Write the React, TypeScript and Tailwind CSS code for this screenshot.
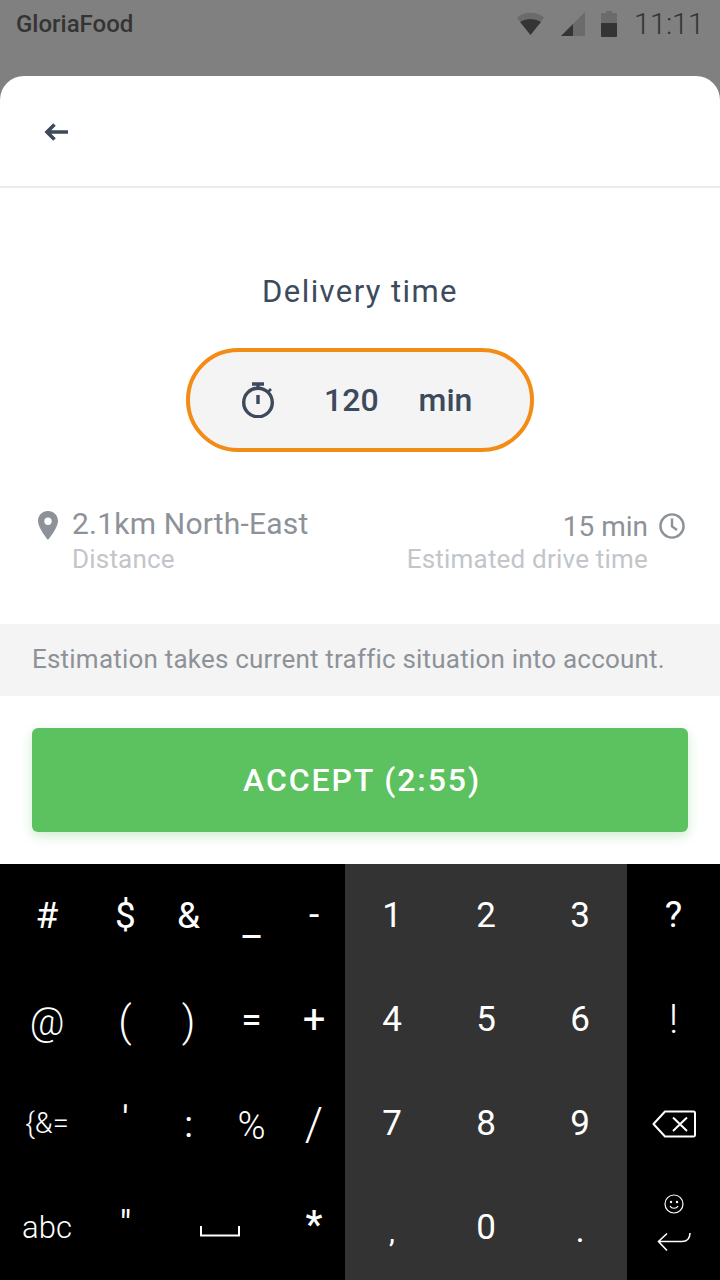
import React from "react";

const K = ({ c = "", children }: { c?: string; children: React.ReactNode }) => (
  <div className={`flex items-center justify-center ${c}`}>{children}</div>
);

export default function App() {
  return (
    <div className="relative flex h-[1280px] w-[720px] flex-col overflow-hidden bg-[#808080] font-['Roboto',sans-serif]">
      <div className="flex h-[48px] items-center justify-between pl-[16px] pr-[16px] text-[#343434]">
        <span className="text-[24px] font-medium">GloriaFood</span>
        <div className="flex items-center">
          <svg width="27" height="26" viewBox="0 0 27 26" className="mr-[17px]">
            <path d="M0 6.5C7 0 20 0 27 6.5L24 11C18 7 9 7 3 11Z" fill="#6b6b6b" />
            <path d="M3 11C9 7 18 7 24 11L13.5 24Z" fill="#343434" />
          </svg>
          <svg width="24" height="24" viewBox="0 0 24 24" className="mr-[16px]">
            <path d="M24 0V24H0Z" fill="#6b6b6b" />
            <path d="M12 12V24H0Z" fill="#343434" />
          </svg>
          <svg width="16" height="26" viewBox="0 0 16 26" className="mr-[17px]">
            <path d="M5 0H11V2H15A1 1 0 0 1 16 3V12H0V3A1 1 0 0 1 1 2H5Z" fill="#6b6b6b" />
            <path d="M0 12H16V25A1 1 0 0 1 15 26H1A1 1 0 0 1 0 25Z" fill="#343434" />
          </svg>
          <span className="text-[30px] font-light leading-none tracking-[-0.5px]">11:11</span>
        </div>
      </div>

      <div className="mt-[28px] flex h-[788px] flex-col rounded-t-[24px] bg-white">
        <div className="flex h-[112px] shrink-0 items-center border-b-2 border-[#ebebeb] pl-[44px] pt-[2px]">
          <svg width="24" height="18" viewBox="0 0 24 18">
            <path d="M24 9H3M10.5 1.5L3 9L10.5 16.5" fill="none" stroke="#3d4a5c" strokeWidth="3.6" />
          </svg>
        </div>

        <div className="mt-[84px] text-center text-[31px] leading-[40px] tracking-[1.4px] text-[#3d4a5c]">Delivery time</div>

        <div className="mt-[36px] flex h-[104px] w-[348px] items-center self-center rounded-full border-4 border-[#f28c16] bg-[#f4f4f4] text-[#3d4a5c]">
          <svg width="36" height="36" viewBox="0 0 36 36" className="ml-[50px]" fill="none" stroke="#3d4a5c" strokeWidth="3.4">
            <circle cx="18" cy="20.5" r="14.3" />
            <path d="M12 2H24M18 2V6M18 13V22" />
            <path d="M28 10L31 7" strokeWidth="2.6" />
          </svg>
          <span className="ml-[48px] text-[32px] font-medium leading-none">120</span>
          <span className="ml-[40px] text-[32px] font-medium leading-none">min</span>
        </div>

        <div className="mt-[52px] flex justify-between pl-[37px] pr-[34px]">
          <div className="flex">
            <svg width="22" height="30" viewBox="0 0 22 30" className="mt-[7px]">
              <path fillRule="evenodd" d="M11 0C5 0 1 4.5 1 10C1 17 11 29 11 29C11 29 21 17 21 10C21 4.5 17 0 11 0ZM11 6.5A3.7 3.7 0 1 1 11 13.9A3.7 3.7 0 0 1 11 6.5Z" fill="#8d9299" />
            </svg>
            <div className="ml-[13px]">
              <div className="text-[30px] leading-[40px] tracking-[0.2px] text-[#8d9299]">2.1km North-East</div>
              <div className="mt-[-3px] text-[26px] leading-[36px] tracking-[0.2px] text-[#c2c5c9]">Distance</div>
            </div>
          </div>
          <div className="flex">
            <div className="text-right">
              <div className="mt-[4px] text-[28px] leading-[38px] text-[#8d9299]">15 min</div>
              <div className="mt-[-5px] text-[26px] leading-[36px] tracking-[0.2px] text-[#c2c5c9]">Estimated drive time</div>
            </div>
            <svg width="28" height="28" viewBox="0 0 28 28" className="ml-[10px] mt-[8px]" fill="none" stroke="#8d9299" strokeWidth="2.4">
              <circle cx="14" cy="14" r="11.6" />
              <path d="M14 6.5V14.5L19 18" />
            </svg>
          </div>
        </div>

        <div className="mt-[47px] flex h-[72px] shrink-0 items-center bg-[#f4f4f4] pb-[2px] pl-[32px] text-[26px] tracking-[0.21px] text-[#8d9299]">
          Estimation takes current traffic situation into account.
        </div>

        <div className="mx-[32px] mt-[32px] flex h-[104px] items-center justify-center rounded-[6px] bg-[#5cc15f] pl-[4px] text-[32px] font-medium tracking-[1.9px] text-white shadow-[0_4px_12px_rgba(92,193,95,0.3)]">
          ACCEPT (2:55)
        </div>
      </div>

      <div className="grid h-[416px] grid-cols-[94px_63px_63px_63px_62px_94px_94px_94px_93px] grid-rows-4 bg-black text-white">
        <K c="text-[37px]">#</K>
        <K c="text-[37px]">$</K>
        <K c="text-[37px]">&amp;</K>
        <K c="text-[40px] pt-[12px]">_</K>
        <K c="text-[37px] pb-[2px]">-</K>
        <K c="bg-[#333333] text-[35px]">1</K>
        <K c="bg-[#333333] text-[35px]">2</K>
        <K c="bg-[#333333] text-[35px]">3</K>
        <K c="text-[37px] pb-[2px]">?</K>

        <K c="text-[38px] font-light pt-[4px]">@</K>
        <K c="text-[42px] font-light pt-[2px] pr-[1px]">(</K>
        <K c="text-[42px] font-light pt-[2px]">)</K>
        <K c="text-[37px]">=</K>
        <K c="text-[40px]">+</K>
        <K c="bg-[#333333] text-[35px]">4</K>
        <K c="bg-[#333333] text-[35px]">5</K>
        <K c="bg-[#333333] text-[35px]">6</K>
        <K c="text-[40px] font-light">!</K>

        <K c="text-[29px] font-light">{"{&="}</K>
        <K c="text-[36px] pb-[8px]">'</K>
        <K c="text-[36px] pt-[2px]">:</K>
        <K c="text-[38px] pt-[4px] font-light">%</K>
        <K c="text-[46px] font-light">/</K>
        <K c="bg-[#333333] text-[35px]">7</K>
        <K c="bg-[#333333] text-[35px]">8</K>
        <K c="bg-[#333333] text-[35px]">9</K>
        <K>
          <svg width="44" height="28" viewBox="0 0 44 28" fill="none" stroke="white" strokeWidth="2" strokeLinejoin="round">
            <path d="M1.5 14L13 1.5H41.5A1.5 1.5 0 0 1 43 3V25A1.5 1.5 0 0 1 41.5 26.5H13Z" />
            <path d="M21 7.5L35 21M35 7.5L21 21" />
          </svg>
        </K>

        <K c="text-[31px] font-light">abc</K>
        <K c="text-[36px] pb-[6px]">"</K>
        <K c="col-span-2">
          <svg width="40" height="12" viewBox="0 0 40 12" fill="none" stroke="white" strokeWidth="2" className="mt-[6px]">
            <path d="M1 1V10.5H39V1" />
          </svg>
        </K>
        <K c="text-[38px] font-medium pb-[6px]">*</K>
        <K c="bg-[#333333] text-[30px] pt-[6px]">,</K>
        <K c="bg-[#333333] text-[35px]">0</K>
        <K c="bg-[#333333] text-[35px] pt-[6px]">.</K>
        <K>
          <div className="flex flex-col items-center pb-[10px]">
            <svg width="20" height="20" viewBox="0 0 20 20" fill="none" stroke="white" strokeWidth="1.2">
              <circle cx="10" cy="10" r="9" />
              <circle cx="7" cy="8" r="0.6" fill="white" />
              <circle cx="13" cy="8" r="0.6" fill="white" />
              <path d="M6 12C7.5 15 12.5 15 14 12" />
            </svg>
            <svg width="34" height="20" viewBox="0 0 34 20" fill="none" stroke="white" strokeWidth="1.6" className="mt-[18px]">
              <path d="M33 1C33 6 30 9.5 25 9.5H2M10 1.5L1.5 9.5L10 18.5" />
            </svg>
          </div>
        </K>
      </div>
    </div>
  );
}
